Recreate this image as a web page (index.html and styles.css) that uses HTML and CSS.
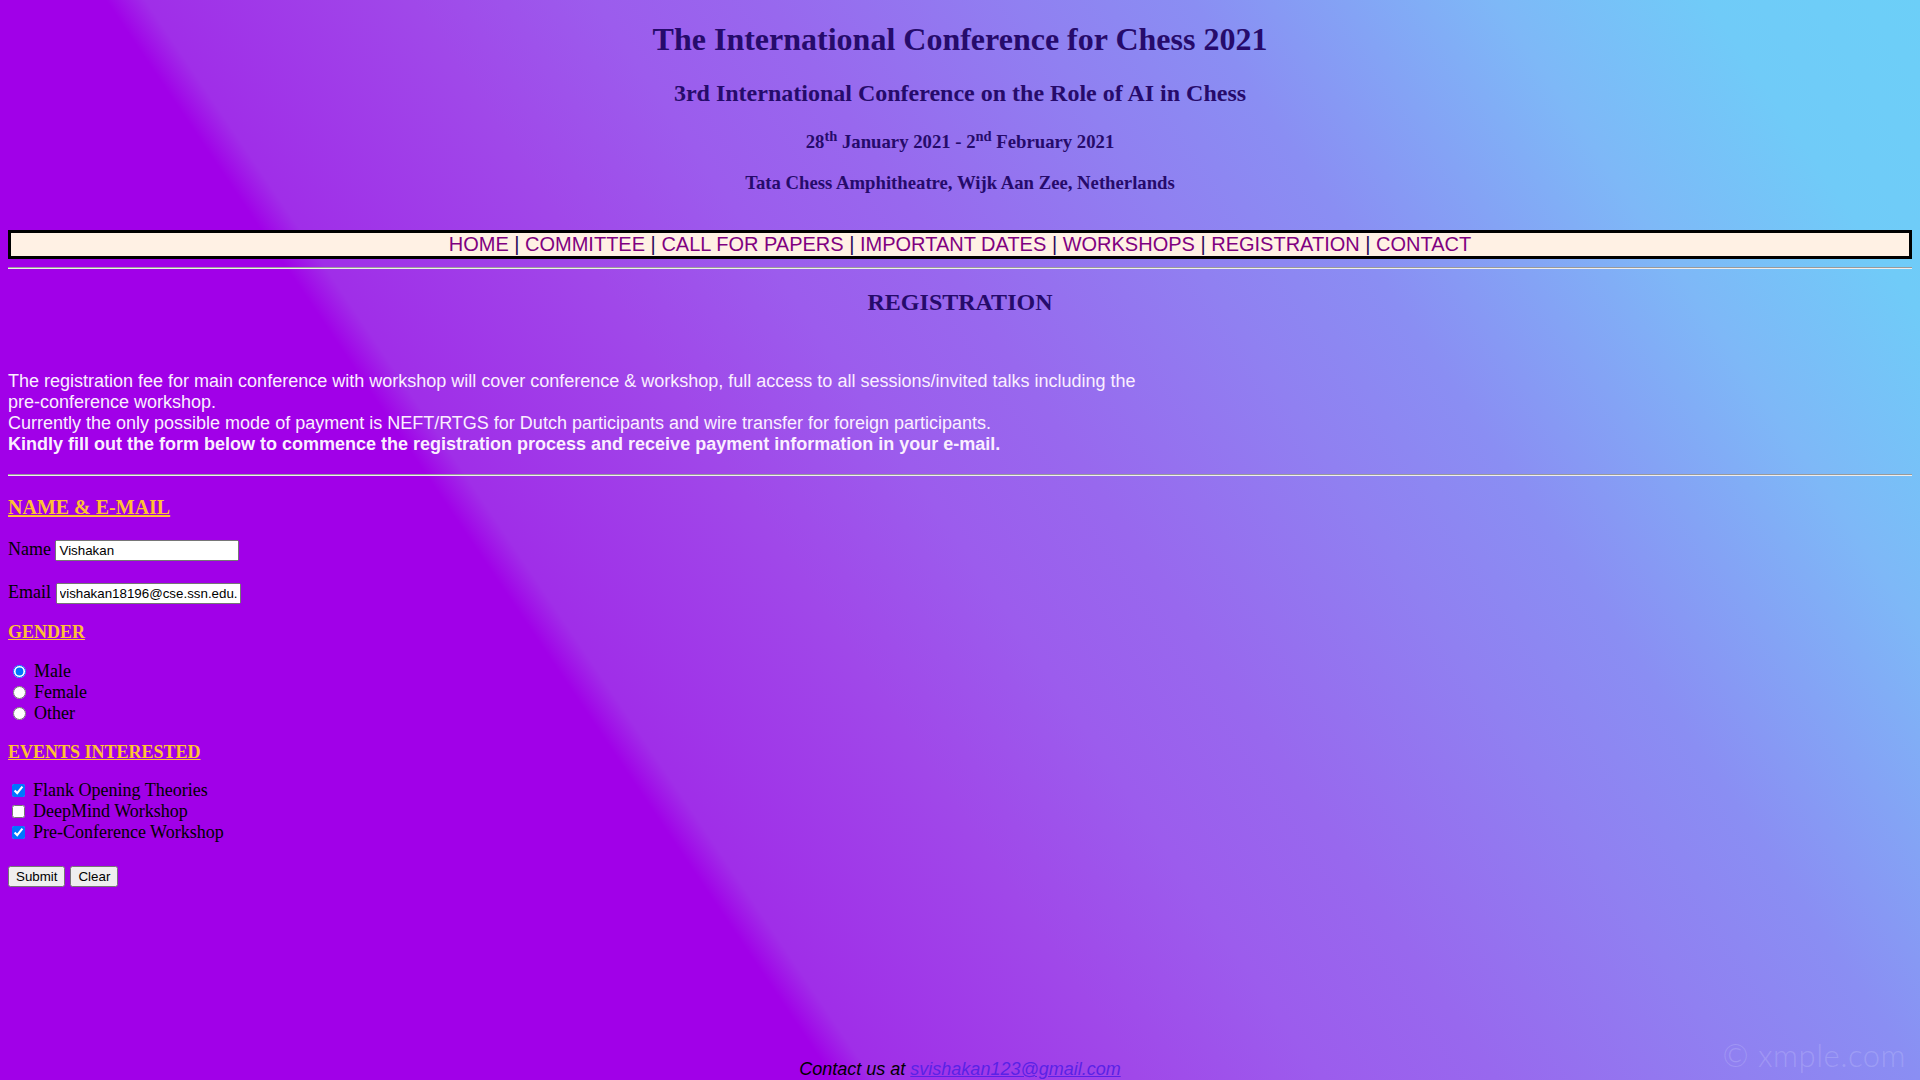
FILE: index.html
```html
<!DOCTYPE html>
<html lang="en">
<head>
<meta charset="utf-8">
<title>Registration - The International Conference for Chess 2021</title>
<link rel="stylesheet" href="styles.css">
</head>
<body>
<header class="masthead">
  <h1 class="title">The International Conference for Chess 2021</h1>
  <h2 class="subtitle">3rd International Conference on the Role of AI in Chess</h2>
  <h3 class="dates">28<sup>th</sup> January 2021 - 2<sup>nd</sup> February 2021</h3>
  <h3 class="venue">Tata Chess Amphitheatre, Wijk Aan Zee, Netherlands</h3>
</header>

<nav class="navbar">
  <a href="#">HOME</a> <span class="sep">|</span>
  <a href="#">COMMITTEE</a> <span class="sep">|</span>
  <a href="#">CALL FOR PAPERS</a> <span class="sep">|</span>
  <a href="#">IMPORTANT DATES</a> <span class="sep">|</span>
  <a href="#">WORKSHOPS</a> <span class="sep">|</span>
  <a href="#">REGISTRATION</a> <span class="sep">|</span>
  <a href="#">CONTACT</a>
</nav>
<hr class="rule rule-top">

<h2 class="page-title">REGISTRATION</h2>

<p class="intro">
  The registration fee for main conference with workshop will cover conference &amp; workshop, full access to all sessions/invited talks including the pre-conference workshop.<br>
  Currently the only possible mode of payment is NEFT/RTGS for Dutch participants and wire transfer for foreign participants.<br>
  <b>Kindly fill out the form below to commence the registration process and receive payment information in your e-mail.</b>
</p>
<hr class="rule rule-bottom">

<form class="reg-form" onsubmit="return false;">
  <h3 class="section section-name">NAME &amp; E-MAIL</h3>
  <div class="field field-name"><label for="name">Name</label> <input id="name" class="text-input" type="text" value="Vishakan"></div>
  <div class="field field-email"><label for="email">Email</label> <input id="email" class="text-input" type="text" value="vishakan18196@cse.ssn.edu.in"></div>

  <h3 class="section section-gender">GENDER</h3>
  <div class="options options-gender">
    <div class="option"><input class="radio" type="radio" name="gender" id="g-male" checked><label for="g-male">Male</label></div>
    <div class="option"><input class="radio" type="radio" name="gender" id="g-female"><label for="g-female">Female</label></div>
    <div class="option"><input class="radio" type="radio" name="gender" id="g-other"><label for="g-other">Other</label></div>
  </div>

  <h3 class="section section-events">EVENTS INTERESTED</h3>
  <div class="options options-events">
    <div class="option"><input class="check" type="checkbox" id="e-flank" checked><label for="e-flank">Flank Opening Theories</label></div>
    <div class="option"><input class="check" type="checkbox" id="e-deep"><label for="e-deep">DeepMind Workshop</label></div>
    <div class="option"><input class="check" type="checkbox" id="e-pre" checked><label for="e-pre">Pre-Conference Workshop</label></div>
  </div>

  <div class="actions">
    <button type="submit" class="btn">Submit</button>
    <button type="reset" class="btn">Clear</button>
  </div>
</form>

<footer class="footer">
  <i>Contact us at <a href="#" class="mail">svishakan123@gmail.com</a></i>
</footer>

<div class="watermark">© xmple.com</div>
</body>
</html>
```

FILE: styles.css
```css
html {
  min-height: 100%;
  background: linear-gradient(56deg,
    #a100e8 0%,
    #a100e8 31.5%,
    #a02ee8 33%,
    #a048e9 43%,
    #9c5ced 50%,
    #9868ee 56.5%,
    #9080f1 66%,
    #8a8ef3 72.5%,
    #7eb8f7 84%,
    #70cbf8 92%,
    #6ccff8 100%);
}

body {
  margin: 0;
  padding: 0 8px;
  font-family: "Liberation Serif", "Times New Roman", serif;
  color: #000;
}

.masthead {
  text-align: center;
  color: #260b6b;
}

.title {
  font-size: 32px;
  line-height: 37px;
  margin: 21px 0 0;
}

.subtitle {
  font-size: 24px;
  line-height: 28px;
  margin: 21px 0 0;
}

.dates {
  font-size: 18.72px;
  line-height: 24px;
  margin: 23px 0 0;
}

.dates sup {
  font-size: 14.5px;
  line-height: 0;
}

.venue {
  font-size: 18.72px;
  line-height: 22px;
  margin: 18px 0 0;
}

.navbar {
  margin: 36px 0 0;
  border: 3px solid #000;
  background: #fff1e4;
  text-align: center;
  font-family: "Liberation Sans", Arial, sans-serif;
  font-size: 20px;
  line-height: 23px;
  color: #2a0a5a;
}

.navbar a {
  color: #800080;
  text-decoration: none;
}

.rule {
  border: 0;
  border-top: 1px solid #9a9a9a;
  border-bottom: 1px solid #eeeeee;
  height: 0;
}

.rule-top {
  margin: 8px 0 0;
}

.page-title {
  text-align: center;
  color: #260b6b;
  font-size: 24px;
  line-height: 28px;
  margin: 19px 0 0;
}

.intro {
  width: 60%;
  margin: 55px 0 0;
  font-family: "Liberation Sans", Arial, sans-serif;
  font-size: 18px;
  line-height: 21px;
  color: #fbefff;
}

.rule-bottom {
  margin: 19px 0 0;
}

.reg-form {
  margin: 0;
}

.section {
  margin: 0;
  color: #ffc133;
  text-decoration: underline;
  font-weight: bold;
}

.section-name {
  font-size: 20px;
  line-height: 23px;
  margin-top: 20px;
}

.section-gender {
  font-size: 18px;
  line-height: 20.7px;
  margin-top: 18px;
}

.section-events {
  font-size: 18px;
  line-height: 20.7px;
  margin-top: 18px;
}

.field {
  font-size: 18px;
}

.field-name {
  margin-top: 20px;
}

.field-email {
  margin-top: 21px;
}

.text-input {
  box-sizing: border-box;
  width: 184px;
  height: 21px;
  font-family: "Liberation Sans", Arial, sans-serif;
  font-size: 13.333px;
  vertical-align: baseline;
}

.field-email .text-input {
  width: 185px;
}

.options {
  font-size: 18px;
}

.options-gender {
  margin-top: 18px;
}

.options-events {
  margin-top: 18px;
}

.option {
  display: flex;
  align-items: center;
  height: 21px;
}

.option label {
  margin-left: 5px;
}

.radio {
  width: 13px;
  height: 13px;
  margin: 0 3px 0 5px;
}

.check {
  width: 13px;
  height: 13px;
  margin: 0 3px 0 4px;
}

.actions {
  display: flex;
  gap: 5px;
  margin-top: 23px;
}

.btn {
  font-family: "Liberation Sans", Arial, sans-serif;
  font-size: 13.333px;
}

.footer {
  margin-top: 172px;
  text-align: center;
  font-family: "Liberation Sans", Arial, sans-serif;
  font-size: 18px;
  line-height: 20.7px;
  color: #000;
}

.mail {
  color: #5a22e6;
}

.watermark {
  position: absolute;
  right: 14px;
  bottom: 6px;
  font-family: Lato, "Open Sans", sans-serif;
  font-weight: 300;
  font-size: 31px;
  color: rgba(225, 225, 255, 0.22);
  letter-spacing: 0.5px;
}
```
